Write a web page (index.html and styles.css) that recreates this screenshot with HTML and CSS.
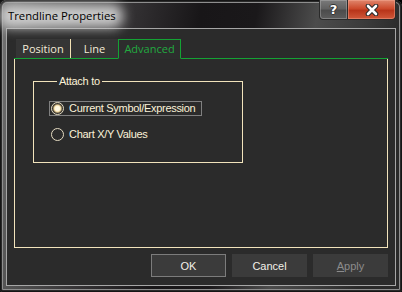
FILE: index.html
```html
<!DOCTYPE html>
<html>
<head>
<meta charset="utf-8">
<link rel="stylesheet" href="styles.css">
</head>
<body>
<div class="window">
  <div class="titlebar">
    <span class="title">Trendline Properties</span>
    <div class="caption">
      <div class="cap-btn help"><span class="q">?</span></div>
      <div class="cap-btn close">
        <svg width="14" height="12" viewBox="0 0 14 12">
          <path d="M3 2 L11 10 M11 2 L3 10" stroke="#2a2a2a" stroke-width="4.6" stroke-linecap="round" fill="none"/>
          <path d="M3 2 L11 10 M11 2 L3 10" stroke="#ffffff" stroke-width="2.6" stroke-linecap="round" fill="none"/>
        </svg>
      </div>
    </div>
  </div>
  <div class="client">
    <div class="tabs">
      <div class="tab tab-pos">Position</div>
      <div class="tab tab-line">Line</div>
      <div class="tab tab-adv">Advanced</div>
    </div>
    <div class="panel">
      <fieldset class="group">
        <legend>Attach to</legend>
        <div class="radio focused"><span class="dot checked"></span><span>Current Symbol/Expression</span></div>
        <div class="radio second"><span class="dot"></span><span>Chart X/Y Values</span></div>
      </fieldset>
    </div>
    <div class="buttons">
      <div class="btn default">OK</div>
      <div class="btn">Cancel</div>
      <div class="btn disabled"><u>A</u>pply</div>
    </div>
  </div>
</div>
</body>
</html>
```
FILE: styles.css
```css
html, body {
  margin: 0;
  padding: 0;
  background: #000;
}
body {
  width: 402px;
  height: 292px;
  overflow: hidden;
}
.window {
  box-sizing: border-box;
  width: 402px;
  height: 292px;
  display: flex;
  flex-direction: column;
  padding: 0 6px 6px 6px;
  border-radius: 7px 7px 3px 3px;
  background: linear-gradient(100deg, #767676 0px, #575757 50px, #343234 130px, #181618 200px, #1a181a 255px, #4c4c4c 315px, #3c3c3c 360px, #2a2a2a 402px);
  box-shadow: inset 0 0 0 1px #151515, inset 0 0 0 2px #2a2a2a, inset 0 0 0 3px #8e8e8e;
}
.titlebar {
  height: 28px;
  display: flex;
  align-items: flex-start;
}
.title {
  position: relative;
  z-index: 0;
  margin: 9px 0 0 2px;
  font-family: "Open Sans", "Noto Sans", sans-serif;
  font-size: 11.3px;
  line-height: 14px;
  color: #000;
}
.title::before {
  content: "";
  position: absolute;
  left: -9px;
  right: -7px;
  top: -5px;
  bottom: -5px;
  z-index: -1;
  border-radius: 10px;
  background: rgba(215, 215, 215, 0.9);
  filter: blur(6px);
}
.caption {
  margin-left: auto;
  display: flex;
}
.cap-btn {
  box-sizing: border-box;
  height: 20px;
  border: 1px solid #2a2a2a;
  border-top: none;
  display: flex;
  align-items: center;
  justify-content: center;
}
.help {
  width: 28px;
  border-radius: 0 0 0 4px;
  border-right: none;
  background: linear-gradient(#7a7a7a, #626262 45%, #4c4c4c 55%, #5c5c5c);
  box-shadow: inset 0 0 0 1px rgba(200, 200, 200, 0.35);
}
.q {
  font-family: "DejaVu Sans", sans-serif;
  font-weight: bold;
  font-size: 13px;
  line-height: 13px;
  color: #fff;
  text-shadow: 1px 0 0 #333, -1px 0 0 #333, 0 1px 0 #333, 0 -1px 0 #333;
}
.close {
  width: 49px;
  border-radius: 0 0 4px 0;
  background: linear-gradient(#e0866c, #cc4a2c 45%, #b8351a 55%, #d0583a);
  box-shadow: inset 0 0 0 1px rgba(255, 190, 170, 0.35);
}
.close svg {
  display: block;
}
.client {
  flex: 1;
  display: flex;
  flex-direction: column;
  border: 1px solid #a6a6a6;
  background: #2b2b2b;
}
.tabs {
  display: flex;
  height: 19px;
  margin: 10px 7px 0 7px;
  padding-left: 2px;
  border-bottom: 1px solid #14a234;
}
.tab {
  box-sizing: border-box;
  height: 19px;
  line-height: 19px;
  font-family: "Open Sans", "Noto Sans", sans-serif;
  font-size: 11px;
  color: #f4ecd8;
  background: #353535;
  text-align: center;
}
.tab-pos {
  width: 55px;
  border-right: 1px solid #f2e2b4;
}
.tab-line {
  width: 47px;
}
.tab-adv {
  width: 63px;
  height: 20px;
  line-height: 18px;
  margin-bottom: -1px;
  border: 1px solid #14a234;
  border-bottom-color: #2d2d2d;
  background: #2d2d2d;
  color: #22aa40;
}
.panel {
  box-sizing: border-box;
  height: 189px;
  margin: 0 7px;
  padding: 16px 0 0 18px;
  border: 1px solid #f2e4bc;
  border-top: none;
  background: #2b2b2b;
}
.group {
  box-sizing: border-box;
  width: 210px;
  height: 88px;
  margin: 0;
  padding: 0 0 0 15px;
  border: 1px solid #f2e4bc;
  font-family: "Liberation Sans", Arial, sans-serif;
  font-size: 11px;
  letter-spacing: -0.3px;
  color: #fbf2d8;
}
.group legend {
  margin-left: 8px;
  padding: 0 2px;
  line-height: 13px;
  font-size: 11px;
}
.radio {
  box-sizing: border-box;
  display: flex;
  align-items: center;
  width: fit-content;
  height: 15px;
  margin-top: 13px;
  padding: 0 6px 0 1px;
  border: 1px solid transparent;
  line-height: 13px;
}
.radio.second {
  margin-top: 11px;
}
.radio.focused {
  border-color: #808080;
}
.dot {
  box-sizing: border-box;
  width: 13px;
  height: 13px;
  margin-right: 5px;
  border: 1px solid #e6dcc2;
  border-radius: 50%;
  background: #2b2b2b;
  flex: none;
}
.dot.checked {
  background: radial-gradient(circle, #fffbea 0, #fff6dc 2.4px, #ecd49c 3.4px, #6e6148 4.4px, #2b2b2b 5.2px);
}
.buttons {
  display: flex;
  justify-content: flex-end;
  gap: 6px;
  margin-top: 6px;
  padding-right: 7px;
}
.btn {
  box-sizing: border-box;
  width: 75px;
  height: 23px;
  display: flex;
  align-items: center;
  justify-content: center;
  border: 1px solid #3b3b3b;
  background: #3b3b3b;
  font-family: "Liberation Sans", Arial, sans-serif;
  font-size: 11px;
  color: #f2f0e8;
}
.btn.default {
  border-color: #7c7c7c;
}
.btn.disabled {
  color: #8c8c8c;
}
.btn u {
  text-decoration: underline;
}
```
